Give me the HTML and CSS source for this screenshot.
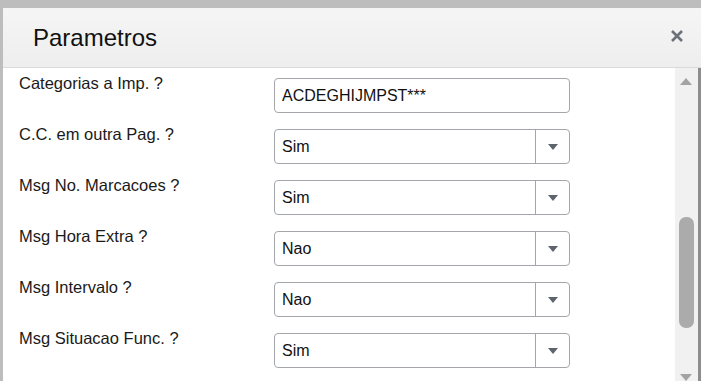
FILE: index.html
```html
<!DOCTYPE html>
<html lang="pt">
<head>
    <meta charset="UTF-8">
    <meta name="viewport" content="width=device-width, initial-scale=1.0">
    <title>Parametros</title>
    <link rel="stylesheet" href="styles.css">
</head>
<body>
    <div class="dialog">
        <header class="dialog-header">
            <h1>Parametros</h1>
            <button class="close" type="button" aria-label="Fechar">
                <svg width="14" height="14" viewBox="0 0 14 14">
                    <path d="M2 2 L12 12 M12 2 L2 12" stroke="#6b7079" stroke-width="2.6" fill="none"/>
                </svg>
            </button>
        </header>
        <div class="dialog-body">
            <form class="params">
                <div class="row">
                    <label for="p1">Categorias a Imp. ?</label>
                    <input type="text" id="p1" value="ACDEGHIJMPST***">
                </div>
                <div class="row">
                    <label for="p2">C.C. em outra Pag. ?</label>
                    <div class="select">
                        <select id="p2"><option>Sim</option><option>Nao</option></select>
                        <span class="select-arrow"></span>
                    </div>
                </div>
                <div class="row">
                    <label for="p3">Msg No. Marcacoes ?</label>
                    <div class="select">
                        <select id="p3"><option>Sim</option><option>Nao</option></select>
                        <span class="select-arrow"></span>
                    </div>
                </div>
                <div class="row">
                    <label for="p4">Msg Hora Extra ?</label>
                    <div class="select">
                        <select id="p4"><option>Nao</option><option>Sim</option></select>
                        <span class="select-arrow"></span>
                    </div>
                </div>
                <div class="row">
                    <label for="p5">Msg Intervalo ?</label>
                    <div class="select">
                        <select id="p5"><option>Nao</option><option>Sim</option></select>
                        <span class="select-arrow"></span>
                    </div>
                </div>
                <div class="row">
                    <label for="p6">Msg Situacao Func. ?</label>
                    <div class="select">
                        <select id="p6"><option>Sim</option><option>Nao</option></select>
                        <span class="select-arrow"></span>
                    </div>
                </div>
            </form>
            <div class="scrollbar">
                <span class="scroll-up"></span>
                <span class="scroll-thumb"></span>
                <span class="scroll-down"></span>
            </div>
        </div>
    </div>
</body>
</html>
```

FILE: styles.css
```css
* {
    box-sizing: border-box;
}

body {
    font-family: "Liberation Sans", Arial, sans-serif;
    background-color: #bdbdbd;
    margin: 0;
    padding: 8px 0 0 3px;
    height: 381px;
    overflow: hidden;
}

.dialog {
    display: flex;
    flex-direction: column;
    height: 373px;
    background-color: white;
}

.dialog-header {
    display: flex;
    align-items: center;
    justify-content: space-between;
    height: 60px;
    padding: 0 17px 0 30px;
    background: linear-gradient(#f5f5f5, #eeeeee);
    border-bottom: 1px solid #dadada;
}

.dialog-header h1 {
    margin: 0;
    font-size: 24px;
    font-weight: normal;
    color: #111;
    line-height: 28px;
}

.close {
    border: none;
    background: none;
    padding: 0;
    width: 14px;
    height: 14px;
    margin-top: -4px;
    cursor: pointer;
}

.close svg {
    display: block;
}

.dialog-body {
    flex: 1;
    display: flex;
    overflow: hidden;
}

.params {
    flex: 1;
    padding: 6px 0 0 16px;
}

.row {
    display: flex;
    align-items: flex-start;
    margin-bottom: 12px;
}

.row label {
    width: 255px;
    font-size: 16.5px;
    line-height: 18px;
    color: #1a1a1a;
}

.row input[type="text"],
.select {
    width: 296px;
    height: 35px;
    margin-top: 4px;
    border: 1px solid #a3a7ab;
    border-radius: 4px;
    background-color: white;
}

.row input[type="text"] {
    padding: 0 7px;
    font-family: inherit;
    font-size: 16px;
    color: #111;
}

.select {
    display: flex;
}

.select select {
    flex: 1;
    appearance: none;
    border: none;
    background: none;
    padding: 0 7px;
    font-family: inherit;
    font-size: 16px;
    color: #111;
}

.select-arrow {
    width: 34px;
    border-left: 1px solid #a3a7ab;
    display: flex;
    align-items: center;
    justify-content: center;
}

.select-arrow::after {
    content: "";
    border-left: 5px solid transparent;
    border-right: 5px solid transparent;
    border-top: 6px solid #5e646c;
}

.scrollbar {
    width: 26px;
    display: flex;
    flex-direction: column;
    align-items: center;
    background-color: #f1f1f1;
    border-right: 3px solid #8d8d8d;
    padding-right: 1px;
}

.scroll-up,
.scroll-down {
    width: 0;
    height: 0;
    border-left: 6px solid transparent;
    border-right: 6px solid transparent;
}

.scroll-up {
    margin-top: 10px;
    border-bottom: 7px solid #a3a3a3;
}

.scroll-thumb {
    width: 15px;
    height: 114px;
    margin-top: 132px;
    border-radius: 7px;
    background-color: #ababab;
}

.scroll-down {
    margin-top: 46px;
    border-top: 7px solid #a3a3a3;
}
```
